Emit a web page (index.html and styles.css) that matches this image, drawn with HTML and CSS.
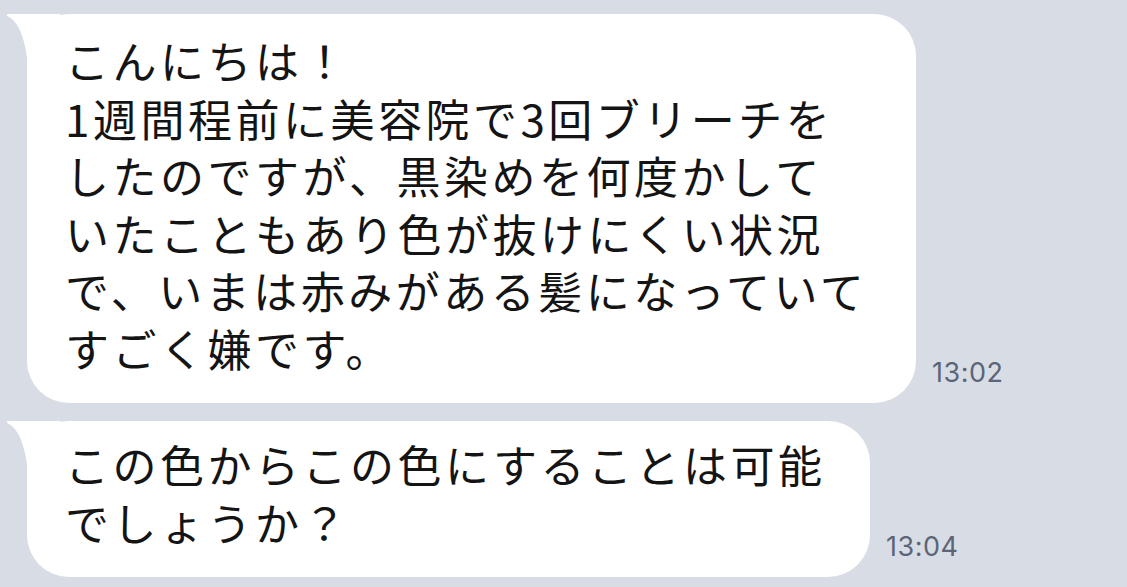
FILE: index.html
```html
<!DOCTYPE html>
<html lang="ja">
<head>
<meta charset="utf-8">
<link rel="stylesheet" href="styles.css">
<title>Chat</title>
</head>
<body>
<div class="chat">
  <div class="row">
    <svg class="tail" width="60" height="70" viewBox="0 0 60 70"><path d="M7 14.5 C 9 13.6, 14 14, 24 14 L 60 14 L 60 70 L 27 70 L 27 57 Q 22 24 9 17 Q 6 15.5 7 14.5 Z" fill="#fff"/></svg>
    <div class="bubble bubble-first">こんにちは！<br>1週間程前に美容院で3回ブリーチを<br>したのですが、黒染めを何度かして<br>いたこともあり色が抜けにくい状況<br>で、いまは赤みがある髪になっていて<br>すごく嫌です。</div>
    <div class="time">13:02</div>
  </div>
  <div class="row">
    <svg class="tail" width="60" height="70" viewBox="0 0 60 70"><path d="M7 14.5 C 9 13.6, 14 14, 24 14 L 60 14 L 60 70 L 27 70 L 27 57 Q 22 24 9 17 Q 6 15.5 7 14.5 Z" fill="#fff"/></svg>
    <div class="bubble bubble-second">この色からこの色にすることは可能<br>でしょうか？</div>
    <div class="time">13:04</div>
  </div>
</div>
</body>
</html>
```

FILE: styles.css
```css
html, body {
  margin: 0;
  padding: 0;
  background: #d8dde5;
}

.chat {
  display: flex;
  flex-direction: column;
  gap: 18px;
  padding-top: 14px;
}

.row {
  position: relative;
  display: flex;
  align-items: flex-end;
  gap: 16px;
  padding-left: 27px;
}

.tail {
  position: absolute;
  left: 0;
  top: -14px;
}

.bubble {
  position: relative;
  box-sizing: border-box;
  background: #fff;
  border-radius: 42px;
  padding-left: 38px;
  font-family: "Noto Sans CJK JP", "Noto Sans", sans-serif;
  font-size: 44px;
  line-height: 57.5px;
  letter-spacing: 3.5px;
  color: #141414;
  white-space: nowrap;
}

.bubble-first {
  width: 889px;
  padding-top: 18px;
  padding-bottom: 26px;
}

.bubble-second {
  width: 843px;
  padding-top: 15px;
  padding-bottom: 26px;
}

.time {
  font-family: Inter, "Liberation Sans", sans-serif;
  font-size: 27px;
  line-height: 26px;
  letter-spacing: 0.5px;
  color: #5b6577;
  margin-bottom: 17px;
}
```
